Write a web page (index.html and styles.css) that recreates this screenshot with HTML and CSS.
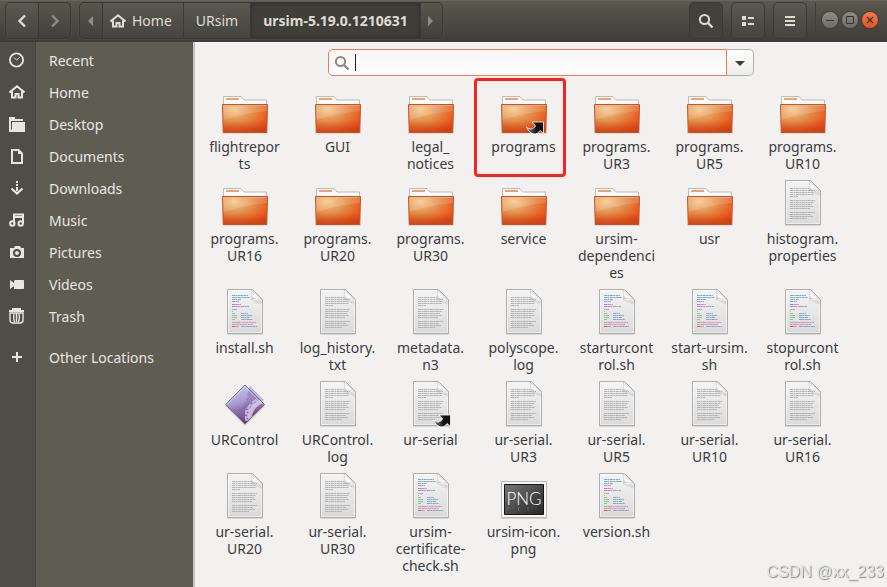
FILE: index.html
```
<!DOCTYPE html>
<html lang="en">
<head>
<meta charset="utf-8">
<meta name="viewport" content="width=device-width, initial-scale=1">
<title>ursim-5.19.0.1210631</title>
<link rel="stylesheet" href="styles.css">
</head>
<body>
<svg class="defs" aria-hidden="true">
  <defs>
    <linearGradient id="paper" x1="0" y1="0" x2="0" y2="1"><stop offset="0" stop-color="#f4f4f4"/><stop offset="1" stop-color="#dadada"/></linearGradient>
    <linearGradient id="curl" x1="0" y1="1" x2="1" y2="0"><stop offset="0" stop-color="#a8a8a8"/><stop offset=".3" stop-color="#fff"/><stop offset="1" stop-color="#d0d0d0"/></linearGradient>
    <radialGradient id="front" cx=".27" cy=".18" r=".95"><stop offset="0" stop-color="#f5c88b"/><stop offset=".45" stop-color="#e28d4a"/><stop offset=".8" stop-color="#ea5a20"/><stop offset="1" stop-color="#dc4a17"/></radialGradient>
    <linearGradient id="shade" x1="0" y1="0" x2="0" y2="1"><stop offset=".6" stop-color="#b83a10" stop-opacity="0"/><stop offset="1" stop-color="#b83a10" stop-opacity=".5"/></linearGradient>
    <linearGradient id="gem" x1="0" y1="0" x2=".3" y2="1"><stop offset="0" stop-color="#cdd8f2"/><stop offset=".5" stop-color="#a99bd0"/><stop offset="1" stop-color="#6b3470"/></linearGradient>
    <linearGradient id="photo" x1="0" y1="0" x2="1" y2="1"><stop offset="0" stop-color="#777"/><stop offset=".5" stop-color="#4c4c4c"/><stop offset="1" stop-color="#262626"/></linearGradient>
    <linearGradient id="arrow" x1="0" y1="0" x2="1" y2="0"><stop offset="0" stop-color="#888"/><stop offset=".6" stop-color="#111"/></linearGradient>
  </defs>
  <symbol id="folder" viewBox="0 0 48 48">
    <path d="M1 45h46v2H1z" fill="#000" opacity=".08"/>
    <path d="M2.500 20V9.500h17.500l3 3.500h22.500V20z" fill="#fafafa" stroke="#bcbcba"/>
    <path d="M5 11h13v2H5z" fill="#f2a06d"/>
    <path d="M1.500 17.500h45l-.7 28H2.200z" fill="url(#front)" stroke="#c2542a"/>
    <path d="M2 18h44l-.7 27H2.700z" fill="url(#shade)"/>
    <path d="M2 18h44v6Q24 26 2.500 33z" fill="#fff" opacity=".14"/>
    <path d="M2.500 18.500h43" stroke="#f2b78a" opacity=".6"/>
  </symbol>
  <symbol id="sheet" viewBox="0 0 48 48">
    <path d="M6 46h36v1H6z" fill="#000" opacity=".1"/>
    <path d="M6.500 1.500h25l10 10v34h-35z" fill="url(#paper)" stroke="#adadad"/>
    <path d="M7.500 2.500H31v9h9.500v33h-33z" fill="none" stroke="#fff" opacity=".5"/>
    <path d="M30 2c1 3 1 6 .3 9.300 3.500-.8 7-.8 10.700.2z" fill="url(#curl)" stroke="#bbb" stroke-width=".5"/>
    <path d="M30 12c4 0 8 0 11 1v4z" fill="#000" opacity=".08"/>
  </symbol>
  <symbol id="text" viewBox="0 0 48 48">
    <use href="#sheet"/>
    <path d="M11 9.500h19M11 11.500h25M11 13.500h24M11 15.500h24M11 17.500h8M11 21.500h25M11 23.500h24M11 25.500h22M11 27.500h24M11 29.500h20M11 33.500h25M11 35.500h21M11 37.500h23M11 39.500h17" stroke="#b2b2b2" fill="none" stroke-dasharray="3 .5 2 .4"/>
  </symbol>
  <symbol id="script" viewBox="0 0 48 48">
    <use href="#sheet"/>
    <g fill="none" stroke-dasharray="3 .4 2 .4">
      <path d="M11 7.500h16M11 9.500h18M11 11.500h9M11 13.500h7M20 18.500h8M20 25.500h7M20 27.500h11M20 29.500h9M20 31.500h12M20 38.500h16" stroke="#86a9c1"/>
      <path d="M11 16.500h4M11 18.500h5" stroke="#aa7fda"/>
      <path d="M15 16.500h5M16 18.500h4M16 34.500h19M15 36.500h17" stroke="#d98fb9"/>
      <path d="M11 21.500h3M11 25.500h3M11 27.500h3M11 29.500h3M11 31.500h3" stroke="#8acb8a"/>
      <path d="M14 21.500h2M11 23.500h1M14 27.500h2M14 29.500h2M11 34.500h5M11 36.500h4M15 38.500h3" stroke="#aaa"/>
      <path d="M11 38.500h4" stroke="#e25555"/>
    </g>
  </symbol>
  <symbol id="link" viewBox="0 0 18 14">
    <path d="M6 1h11.500v11.500l-3.500-3c-3 5-10 5-13.500-3.500 3 3 7 2.500 9-1z" fill="url(#arrow)" stroke="#fff" stroke-width=".8"/>
  </symbol>
  <symbol id="program" viewBox="0 0 48 48">
    <path d="M24 6 44 26 24 46 4 26z" fill="#000" opacity=".15"/>
    <path d="M24 5 43.500 24.500 24 44 4.500 24.500z" fill="url(#gem)"/>
    <path d="M5 25l3 2 1 2 2-1 1 2 2-1 2 1 2-2 2 1 1-2 2-1v-3l3-1-1-3 2-2-1-3 2-2-1-3 2-3 14 14-5 2-4 3-2 4-2 5-3 4-4 2z" fill="#7f6dac" opacity=".45"/>
    <path d="M27 40c-1-9 3-16 12-20l3 3c-7 3-11 9-11 14z" fill="#e3daf2" opacity=".75"/>
    <path d="M27 40h-2v-3h2v-3h-2v-3h3v-3h-1l2-3 2 1 2-2-1-2 3-2 2 2" fill="none" stroke="#d9cdec" stroke-width="2" opacity=".7"/>
    <path d="M24 5 43.500 24.500 24 44 4.500 24.500z" fill="none" stroke="#7b6a94"/>
    <path d="M6 24.500 24 6.500l18 18" fill="none" stroke="#e3f1fb" opacity=".6"/>
  </symbol>
  <symbol id="home" viewBox="0 0 16 16">
    <path d="M.5 8.500 8 2.300l7.500 6.200M3 7.500v6h3.500V10h3v3.500H13v-6" fill="none" stroke="currentColor" stroke-width="2"/>
  </symbol>
  <symbol id="lens" viewBox="0 0 16 16">
    <circle cx="6.500" cy="6.500" r="4.600" fill="none" stroke="currentColor" stroke-width="2"/><path d="m10 10 4.500 4.500" stroke="currentColor" stroke-width="2.400"/>
  </symbol>
</svg>

<header class="titlebar">
  <div class="group nav">
    <button aria-label="Back"><svg viewBox="0 0 16 16"><path d="M11 2.500 5.500 8l5.500 5.500" fill="none" stroke="currentColor" stroke-width="2.400"/></svg></button>
    <button aria-label="Forward" disabled><svg viewBox="0 0 16 16"><path d="M5 2.500 10.500 8 5 13.500" fill="none" stroke="currentColor" stroke-width="2.400"/></svg></button>
  </div>
  <nav class="group path" aria-label="Path">
    <button class="edge" aria-label="Scroll left"><svg viewBox="0 0 16 16"><path d="M10 3v10L5 8z" fill="currentColor"/></svg></button>
    <button><svg viewBox="0 0 16 16"><use href="#home"/></svg>Home</button>
    <button>URsim</button>
    <button class="current">ursim-5.19.0.1210631</button>
    <button class="edge" aria-label="Scroll right"><svg viewBox="0 0 16 16"><path d="M5 3v10l5-5z" fill="currentColor"/></svg></button>
  </nav>
  <div class="tools">
    <button class="tool pressed" aria-label="Search"><svg viewBox="0 0 16 16"><use href="#lens"/></svg></button>
    <button class="tool" aria-label="List view"><svg viewBox="0 0 16 16"><path d="M2 3h4v4H2zM2 9h4v4H2zM8 4h6v2H8zM8 10h6v2H8z" fill="currentColor"/></svg></button>
    <button class="tool" aria-label="Menu"><svg viewBox="0 0 16 16"><path d="M3 3h10v2H3zM3 7h10v2H3zM3 11h10v2H3z" fill="currentColor"/></svg></button>
  </div>
  <div class="window">
    <button aria-label="Minimize"><svg viewBox="0 0 16 16"><path d="M4 8.500h8" stroke="currentColor"/></svg></button>
    <button aria-label="Maximize"><svg viewBox="0 0 16 16"><path d="M4.500 4.500h7v7h-7z" fill="none" stroke="currentColor"/></svg></button>
    <button class="close" aria-label="Close"><svg viewBox="0 0 16 16"><path d="m5 5 6 6m0-6-6 6" stroke="currentColor" stroke-width="1.300"/></svg></button>
  </div>
</header>

<div class="body">
  <aside class="sidebar">
    <a href="#"><svg viewBox="0 0 16 16"><circle cx="7.500" cy="8" r="6.600" fill="none" stroke="currentColor" stroke-width="1.800"/><path d="m5 5.500 2.500 2.500 3.500-3" fill="none" stroke="currentColor"/></svg>Recent</a>
    <a href="#"><svg viewBox="0 0 16 16"><use href="#home"/></svg>Home</a>
    <a href="#"><svg viewBox="0 0 16 16"><path d="M0 1h6v2h8v2H2v8.500h1V6h13v10H0z" fill="currentColor"/></svg>Desktop</a>
    <a href="#"><svg viewBox="0 0 16 16"><path d="M3 2h6.500L13 5.500V15H3z" fill="none" stroke="currentColor" stroke-width="2"/><path d="M9 1v5h5z" fill="currentColor"/></svg>Documents</a>
    <a href="#"><svg viewBox="0 0 16 16"><path d="M7 1h2v2H7zM7 4h2v2H7zM7 7h2v4H7z" fill="currentColor"/><path d="m2.500 8.500 5.500 5 5.500-5" fill="none" stroke="currentColor" stroke-width="2.200"/></svg>Downloads</a>
    <a href="#"><svg viewBox="0 0 16 16"><path d="M5 11.500V2.500h9v9M5 5h9" fill="none" stroke="currentColor" stroke-width="2"/><circle cx="3.300" cy="11.500" r="2.200" fill="none" stroke="currentColor" stroke-width="2"/><circle cx="11.700" cy="11.500" r="2.200" fill="none" stroke="currentColor" stroke-width="2"/></svg>Music</a>
    <a href="#"><svg viewBox="0 0 16 16"><path fill-rule="evenodd" d="M1 4h4l1-2h5l1 2h3v10H1zM8 5a4 4 0 1 0 0 8 4 4 0 0 0 0-8zm0 2a2 2 0 1 1 0 4 2 2 0 0 1 0-4z" fill="currentColor"/></svg>Pictures</a>
    <a href="#"><svg viewBox="0 0 16 16"><path d="M1 4v9l4-3V7zM6 4h8.500l.5.500v8l-.5.500H5V5z" fill="currentColor"/></svg>Videos</a>
    <a href="#"><svg viewBox="0 0 16 16"><path d="M0 3h15M3 1h9" stroke="currentColor" stroke-width="2"/><path d="M1 5h13v7q0 3-3 3H4q-3 0-3-3zM5 6q-1 4 .5 8M7.500 5v9M10 6q1 4-.5 8" fill="none" stroke="currentColor" stroke-width="1.400"/></svg>Trash</a>
    <a href="#" class="other"><svg viewBox="0 0 16 16"><path d="M3 8h10M8 3v10" stroke="currentColor" stroke-width="2"/></svg>Other Locations</a>
  </aside>

  <main class="content">
    <div class="search">
      <label class="field">
        <svg viewBox="0 0 16 16" aria-hidden="true"><use href="#lens"/></svg>
        <span class="caret"></span>
        <input type="text" aria-label="Search files">
      </label>
      <button class="drop" aria-label="Search options"><svg viewBox="0 0 16 16"><path d="M3 6h10l-5 5z" fill="currentColor"/></svg></button>
    </div>

    <ul class="files">
      <li><svg><use href="#folder"/></svg><span>flightrepor<br>ts</span></li>
      <li><svg><use href="#folder"/></svg><span>GUI</span></li>
      <li><svg><use href="#folder"/></svg><span>legal_<br>notices</span></li>
      <li class="marked"><svg><use href="#folder"/><use href="#link" x="26" y="34" width="18" height="14"/></svg><span>programs</span></li>
      <li><svg><use href="#folder"/></svg><span>programs.<br>UR3</span></li>
      <li><svg><use href="#folder"/></svg><span>programs.<br>UR5</span></li>
      <li><svg><use href="#folder"/></svg><span>programs.<br>UR10</span></li>

      <li><svg><use href="#folder"/></svg><span>programs.<br>UR16</span></li>
      <li><svg><use href="#folder"/></svg><span>programs.<br>UR20</span></li>
      <li><svg><use href="#folder"/></svg><span>programs.<br>UR30</span></li>
      <li><svg><use href="#folder"/></svg><span>service</span></li>
      <li><svg><use href="#folder"/></svg><span>ursim-<br>dependenci<br>es</span></li>
      <li><svg><use href="#folder"/></svg><span>usr</span></li>
      <li><svg><use href="#text"/></svg><span>histogram.<br>properties</span></li>

      <li><svg><use href="#script"/></svg><span>install.sh</span></li>
      <li><svg><use href="#text"/></svg><span>log_history.<br>txt</span></li>
      <li><svg><use href="#text"/></svg><span>metadata.<br>n3</span></li>
      <li><svg><use href="#text"/></svg><span>polyscope.<br>log</span></li>
      <li><svg><use href="#script"/></svg><span>starturcont<br>rol.sh</span></li>
      <li><svg><use href="#script"/></svg><span>start-ursim.<br>sh</span></li>
      <li><svg><use href="#script"/></svg><span>stopurcont<br>rol.sh</span></li>

      <li><svg><use href="#program"/></svg><span>URControl</span></li>
      <li><svg><use href="#text"/></svg><span>URControl.<br>log</span></li>
      <li><svg><use href="#text"/><use href="#link" x="26" y="34" width="18" height="14"/></svg><span>ur-serial</span></li>
      <li><svg><use href="#text"/></svg><span>ur-serial.<br>UR3</span></li>
      <li><svg><use href="#text"/></svg><span>ur-serial.<br>UR5</span></li>
      <li><svg><use href="#text"/></svg><span>ur-serial.<br>UR10</span></li>
      <li><svg><use href="#text"/></svg><span>ur-serial.<br>UR16</span></li>

      <li><svg><use href="#text"/></svg><span>ur-serial.<br>UR20</span></li>
      <li><svg><use href="#text"/></svg><span>ur-serial.<br>UR30</span></li>
      <li><svg><use href="#script"/></svg><span>ursim-<br>certificate-<br>check.sh</span></li>
      <li>
        <svg viewBox="0 0 48 48">
          <path d="M1 46h46v1H1z" fill="#000" opacity=".12"/>
          <path d="M1.500 9.500h45v36h-45z" fill="#f7f7f7" stroke="#b9b9b6"/>
          <path d="M4.500 12.500h39v30h-39z" fill="url(#photo)" stroke="#161616"/>
          <text x="24" y="33" text-anchor="middle" class="png-text">PNG</text>
          <path d="M8 35v2M13 35v1M18.500 35v4M28 35v4M32 35v1M36 35v2" stroke="#fff" opacity=".2"/>
        </svg>
        <span>ursim-icon.<br>png</span>
      </li>
      <li><svg><use href="#script"/></svg><span>version.sh</span></li>
    </ul>
  </main>
</div>
<div class="watermark">CSDN @xx_233</div>
</body>
</html>
```
FILE: styles.css
```
*, *::after { box-sizing: border-box; }

body {
  margin: 0;
  min-height: 100vh;
  display: flex;
  flex-direction: column;
  background: #f2f1f0;
  color: #3c3c3c;
  font: 14px/17px "Noto Sans", "Open Sans", sans-serif;
}

button {
  margin: 0;
  padding: 0;
  border: 0;
  background: none;
  color: inherit;
  font: inherit;
  display: flex;
  align-items: center;
  justify-content: center;
}

svg { width: 16px; height: 16px; flex: none; }
.defs { position: absolute; width: 0; height: 0; }

/* Title bar */
.titlebar {
  display: flex;
  align-items: flex-start;
  gap: 8px;
  height: 42px;
  padding: 1px 9px 0 5px;
  background: linear-gradient(#5a584e, #3d3c38);
  border-top: 1px solid #66655a;
  color: #dfdbd2;
}

.group {
  display: flex;
  height: 37px;
  border: 1px solid #3a3934;
  border-radius: 5px;
  box-shadow: 0 0 0 1px #5a594f55;
}

.group button { background: linear-gradient(#5a584f, #45443f); }
.group button:first-child { border-radius: 4px 0 0 4px; }
.group button:last-child { border-radius: 0 4px 4px 0; }
.group button + button { border-left: 1px solid #3a3934; }
.nav button { width: 32px; }
.nav button:disabled, .path .edge { color: #8f8c83; background: none; }
.path button { padding: 0 12px; gap: 6px; }
.path button:nth-child(2) { padding: 0 11px 0 7px; }
.path .edge { padding: 0 2px; width: 22px; }
.path .current {
  background: #3f3e39;
  box-shadow: inset 0 0 4px #2d2c29;
  font-weight: 700;
}

.tools { display: flex; gap: 8px; margin-left: auto; }
.tool {
  width: 34px;
  height: 37px;
  border: 1px solid #3a3934;
  border-radius: 5px;
  background: linear-gradient(#5a584f, #45443f);
}
.tool.pressed { background: #42413c; }

.window {
  display: flex;
  align-items: center;
  gap: 4px;
  height: 35px;
  padding-left: 6px;
  border-left: 1px solid #403f3a;
}
.window button {
  width: 16px;
  height: 16px;
  border-radius: 50%;
  background: linear-gradient(#8f8e87, #6b6a64);
  box-shadow: 0 0 0 1px #3a3934;
  color: #35342f;
}
.window .close { background: linear-gradient(#f4794f, #e4541f); }

/* Sidebar */
.body { flex: 1; display: flex; }

.sidebar {
  flex: none;
  width: 195px;
  padding-top: 2px;
  border-right: 2px solid #c5c3bf;
  background: linear-gradient(90deg, #4f4e46 35px, #46453e 35px, #46453e 36px, #5f5d51 36px);
  color: #e8e6e3;
}
.sidebar a {
  display: flex;
  align-items: center;
  gap: 24px;
  height: 32px;
  padding-left: 9px;
  color: inherit;
  text-decoration: none;
}
.sidebar .other { margin-top: 9px; }

/* Search bar */
.content { flex: 1; padding: 7px 0 12px 3px; }

.search { display: flex; width: 426px; max-width: 100%; height: 27px; margin: 0 auto; }
.content .search { margin-left: calc(50% - 215px); }
.field {
  flex: 1;
  display: flex;
  align-items: center;
  padding: 0 5px;
  border: 1px solid #e87e51;
  border-radius: 5px 0 0 5px;
  background: linear-gradient(#f6f5f4, #fff);
  color: #8d8a84;
}
.field input {
  flex: 1;
  min-width: 0;
  border: 0;
  outline: 0;
  background: none;
  font: inherit;
}
.caret { width: 1px; height: 17px; margin-left: 5px; background: #222; }
.drop {
  width: 27px;
  border: 1px solid #b3b0aa;
  border-left: 0;
  border-radius: 0 5px 5px 0;
  background: linear-gradient(#fff, #ececea);
}

/* File grid */
.files {
  display: grid;
  grid-template-columns: repeat(auto-fill, 93px);
  row-gap: 7px;
  margin: 11px 0 0;
  padding: 0;
  list-style: none;
}
.files li {
  display: flex;
  flex-direction: column;
  align-items: center;
  gap: 3px;
  position: relative;
  text-align: center;
  white-space: nowrap;
}
.files svg { width: 48px; height: 48px; }
.png-text { font: 300 17px Lato, sans-serif; fill: #fff; }

.marked::after {
  content: "";
  position: absolute;
  inset: -9px -2px auto -3px;
  width: 92px;
  height: 99px;
  border: 3px solid #fa2320;
  border-radius: 4px;
}

.watermark {
  position: fixed;
  right: 3px;
  bottom: 6px;
  color: #e2e2e2;
  font: 16px/18px "Liberation Sans", sans-serif;
  text-shadow: 1px 1px 1px #888;
}
```
